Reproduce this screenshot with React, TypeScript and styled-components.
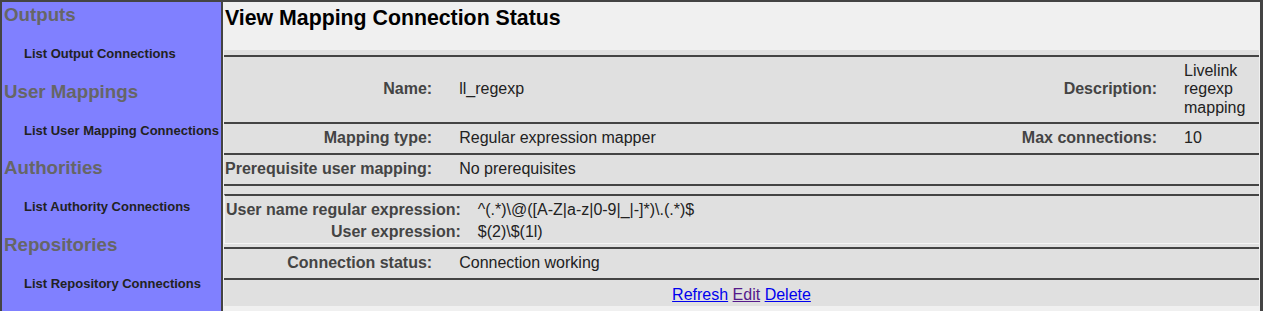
import React from 'react';
import styled, { createGlobalStyle } from 'styled-components';

const GlobalStyle = createGlobalStyle`
  html, body {
    margin: 0;
    padding: 0;
    background: #f0f0f0;
  }
  body {
    font-family: "Liberation Sans", Arial, Helvetica, sans-serif;
    font-size: 16px;
  }
`;

const Frame = styled.div`
  display: flex;
  min-height: 100vh;
  box-sizing: border-box;
  border-top: 2px solid #444;
  border-left: 2px solid #444;
  border-right: 3px solid #444;
  background: #f0f0f0;
`;

const Sidebar = styled.nav`
  flex: none;
  width: 219px;
  background: #8080ff;
  border-right: 2px solid #444;
  padding-top: 2.2px;
  box-sizing: content-box;
`;

const MenuHeading = styled.h3`
  margin: 0;
  padding-left: 2px;
  font-size: 18.72px;
  line-height: 22px;
  font-weight: bold;
  color: #666;
  white-space: nowrap;
`;

const MenuList = styled.ul`
  list-style: none;
  margin: 0;
  padding: 20.1px 0 19.5px 22px;
`;

const MenuLink = styled.a`
  display: block;
  font-size: 13px;
  line-height: 15px;
  font-weight: bold;
  color: #222;
  text-decoration: none;
  white-space: nowrap;
`;

const Main = styled.main`
  flex: 1;
  min-width: 0;
  display: flex;
  flex-direction: column;
`;

const Title = styled.h1`
  margin: 0;
  padding: 3.7px 2px 20.3px;
  font-size: 21.3px;
  line-height: 24px;
  font-weight: bold;
  color: #000;
`;

const Table = styled.div`
  display: grid;
  grid-template-columns: max-content 1fr max-content 88px;
  align-items: center;
  background: #e0e0e0;
  margin: 0 1px;
  padding-top: 5px;
  color: #222;
`;

const Rule = styled.div`
  grid-column: 1 / -1;
  height: 2px;
  background: #444;
`;

const Label = styled.div<{ $pad?: number }>`
  font-weight: bold;
  color: #444;
  text-align: right;
  white-space: nowrap;
  padding: ${(p) => p.$pad ?? 5}px 14px ${(p) => p.$pad ?? 5}px 1px;
  line-height: 18.4px;
`;

const Value = styled.div<{ $span?: number; $pad?: number }>`
  grid-column: span ${(p) => p.$span ?? 1};
  padding: ${(p) => p.$pad ?? 5}px 4px ${(p) => p.$pad ?? 5}px 13px;
  line-height: 18.4px;
`;

const NestedCell = styled.div`
  grid-column: 1 / -1;
  padding: 7.5px 0 3px;
`;

const NestedTable = styled.div`
  display: grid;
  grid-template-columns: max-content 1fr;
  align-items: center;
  border-top: 2px solid #444;
  border-left: 1px solid #f4f4f4;
  border-bottom: 1px solid #f4f4f4;
  padding: 3px 0 0;
`;

const NestedLabel = styled.div`
  font-weight: bold;
  color: #444;
  text-align: right;
  white-space: nowrap;
  padding: 2px 17px 2px 1px;
  line-height: 18.4px;
`;

const NestedValue = styled.div`
  padding: 2px 4px 2px 0;
  line-height: 18.4px;
  white-space: nowrap;
`;

const Actions = styled.div`
  grid-column: 1 / -1;
  text-align: center;
  padding: 6px 0 1.3px;
  line-height: 18.4px;
`;

const ActionLink = styled.a<{ $visited?: boolean }>`
  color: ${(p) => (p.$visited ? '#551a8b' : '#0000ee')};
  text-decoration: underline;
  cursor: pointer;
`;

const menu = [
  { heading: 'Outputs', link: 'List Output Connections' },
  { heading: 'User Mappings', link: 'List User Mapping Connections' },
  { heading: 'Authorities', link: 'List Authority Connections' },
  { heading: 'Repositories', link: 'List Repository Connections' },
];

export default function App() {
  return (
    <>
      <GlobalStyle />
      <Frame>
        <Sidebar>
          {menu.map((m) => (
            <div key={m.heading}>
              <MenuHeading>{m.heading}</MenuHeading>
              <MenuList>
                <li>
                  <MenuLink href="#">{m.link}</MenuLink>
                </li>
              </MenuList>
            </div>
          ))}
        </Sidebar>
        <Main>
          <Title>View Mapping Connection Status</Title>
          <Table>
            <Rule />
            <Label>Name:</Label>
            <Value>ll_regexp</Value>
            <Label>Description:</Label>
            <Value>Livelink regexp mapping</Value>
            <Rule />
            <Label>Mapping type:</Label>
            <Value>Regular expression mapper</Value>
            <Label>Max connections:</Label>
            <Value>10</Value>
            <Rule />
            <Label $pad={5.5}>Prerequisite user mapping:</Label>
            <Value $span={3} $pad={5.5}>
              No prerequisites
            </Value>
            <Rule />
            <NestedCell>
              <NestedTable>
                <NestedLabel>User name regular expression:</NestedLabel>
                <NestedValue>{'^(.*)\\@([A-Z|a-z|0-9|_|-]*)\\.(.*)$'}</NestedValue>
                <NestedLabel>User expression:</NestedLabel>
                <NestedValue>{'$(2)\\$(1l)'}</NestedValue>
              </NestedTable>
            </NestedCell>
            <Rule />
            <Label $pad={5.15}>Connection status:</Label>
            <Value $span={3} $pad={5.15}>
              Connection working
            </Value>
            <Rule />
            <Actions>
              <ActionLink href="#">Refresh</ActionLink>{' '}
              <ActionLink href="#" $visited>
                Edit
              </ActionLink>{' '}
              <ActionLink href="#">Delete</ActionLink>
            </Actions>
          </Table>
        </Main>
      </Frame>
    </>
  );
}
